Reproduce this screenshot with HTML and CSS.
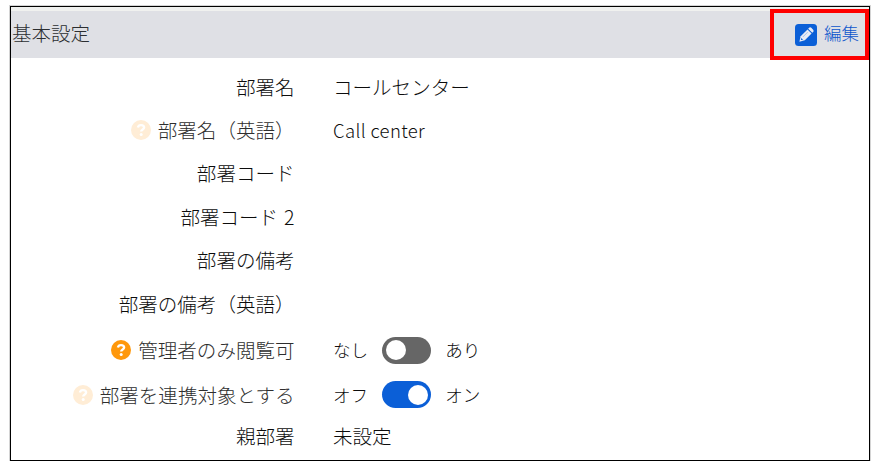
FILE: index.html
```html
<!DOCTYPE html>
<html lang="ja">
<head>
  <meta charset="UTF-8">
  <meta name="viewport" content="width=device-width, initial-scale=1.0">
  <title>基本設定</title>
  <link rel="stylesheet" href="styles.css">
</head>
<body>

  <div class="panel">
    <div class="panel-header">
      <span class="panel-title">基本設定</span>
      <a class="edit-link">
        <svg class="edit-icon" viewBox="0 0 22 22">
          <rect width="22" height="22" rx="3.5" fill="#0b5fd7"/>
          <g transform="translate(11 11) rotate(45)" fill="#e8ebf5">
            <path d="M-2.9 -7.2Q-2.9 -8.8 -1.3 -8.8H1.3Q2.9 -8.8 2.9 -7.2V-6H-2.9Z"/>
            <path d="M-2.9 -5H2.9V4.6L0 9.4L-2.9 4.6Z"/>
            <path d="M-0.8 -3.2V3.6" stroke="#8fb2ea" stroke-width="0.7"/>
            <path d="M-1.3 5.4H1.3L0 7.2Z" fill="#0b5fd7"/>
          </g>
        </svg>
        <span>編集</span>
      </a>
    </div>

    <div class="rows">
      <div class="row">
        <div class="label">部署名</div>
        <div class="value">コールセンター</div>
      </div>
      <div class="row">
        <div class="label muted"><span class="help faded"><svg viewBox="0 0 20 20"><circle cx="10" cy="10" r="10"/><path d="M6.9 7.5C7.3 5.7 8.4 5.1 10 5.1C11.9 5.1 13.1 6.1 13.1 7.6C13.1 9.6 10.2 9.5 10.2 11.6"/><circle class="dot" cx="10.2" cy="14.6" r="1.5"/></svg></span>部署名（英語）</div>
        <div class="value latin">Call center</div>
      </div>
      <div class="row">
        <div class="label">部署コード</div>
        <div class="value"></div>
      </div>
      <div class="row">
        <div class="label">部署コード<span class="num">2</span></div>
        <div class="value"></div>
      </div>
      <div class="row">
        <div class="label">部署の備考</div>
        <div class="value"></div>
      </div>
      <div class="row">
        <div class="label">部署の備考（英語）</div>
        <div class="value"></div>
      </div>
      <div class="row">
        <div class="label muted"><span class="help"><svg viewBox="0 0 20 20"><circle cx="10" cy="10" r="10"/><path d="M6.9 7.5C7.3 5.7 8.4 5.1 10 5.1C11.9 5.1 13.1 6.1 13.1 7.6C13.1 9.6 10.2 9.5 10.2 11.6"/><circle class="dot" cx="10.2" cy="14.6" r="1.5"/></svg></span>管理者のみ閲覧可</div>
        <div class="value switch-row">
          <span>なし</span>
          <span class="switch"><span class="knob"></span></span>
          <span>あり</span>
        </div>
      </div>
      <div class="row">
        <div class="label muted"><span class="help faded"><svg viewBox="0 0 20 20"><circle cx="10" cy="10" r="10"/><path d="M6.9 7.5C7.3 5.7 8.4 5.1 10 5.1C11.9 5.1 13.1 6.1 13.1 7.6C13.1 9.6 10.2 9.5 10.2 11.6"/><circle class="dot" cx="10.2" cy="14.6" r="1.5"/></svg></span>部署を連携対象とする</div>
        <div class="value switch-row">
          <span>オフ</span>
          <span class="switch on"><span class="knob"></span></span>
          <span>オン</span>
        </div>
      </div>
      <div class="row">
        <div class="label">親部署</div>
        <div class="value">未設定</div>
      </div>
    </div>

    <div class="highlight"></div>
  </div>

</body>
</html>
```

FILE: styles.css
```css
* {
  box-sizing: border-box;
}

body {
  margin: 0;
  padding: 6px 5px 0 10px;
  background: #fff;
  color: #0c0c0c;
  font-family: "Noto Sans CJK JP", sans-serif;
  font-weight: 300;
  font-size: 19.55px;
  line-height: 28px;
}

.panel {
  position: relative;
  height: 455px;
  border: 1px solid #000;
  box-shadow: 0 0 0 1px #d4d4d4;
}

.panel-header {
  display: flex;
  align-items: center;
  justify-content: space-between;
  height: 51px;
  padding: 0 10px 0 1px;
  border-top: 4px solid #f0f1ef;
  background: #dfe0e5;
}

.panel-title {
  color: #2b2e31;
  padding-bottom: 4px;
}

.edit-link {
  display: flex;
  align-items: center;
  gap: 7px;
  color: #0d55cc;
  font-size: 17.5px;
}

.edit-link span {
  padding-bottom: 4px;
}

.edit-icon {
  display: block;
  width: 22px;
  height: 22px;
}

.rows {
  display: grid;
  grid-template-rows: repeat(6, 43.4px) 50px 39px 44px;
  padding-top: 7px;
}

.row {
  display: grid;
  grid-template-columns: 283.5px 1fr;
  column-gap: 38.5px;
  align-items: center;
}

.label {
  display: flex;
  align-items: center;
  justify-content: flex-end;
  white-space: nowrap;
}

.muted {
  color: #2e2e2e;
}

.num {
  margin-left: 6px;
}

.latin {
  font-size: 18.5px;
  letter-spacing: 0.35px;
}

.help {
  margin-right: 7px;
}

.help svg {
  display: block;
  width: 20px;
  height: 20px;
  fill: #ff980b;
}

.help path {
  fill: none;
  stroke: #fff;
  stroke-width: 2.4;
}

.help .dot {
  fill: #fff;
}

.faded svg {
  fill: #ffedd6;
}

.switch-row {
  display: flex;
  align-items: center;
  gap: 14px;
  font-size: 17.6px;
}

.switch {
  display: flex;
  align-items: center;
  width: 49px;
  height: 27px;
  padding: 0 4px;
  border-radius: 14px;
  background: #666;
}

.knob {
  width: 20px;
  height: 20px;
  border-radius: 50%;
  background: #fff;
}

.on {
  justify-content: flex-end;
  padding-right: 3px;
  background: #0b5fd7;
}

/* red frame drawn over the edit button */
.highlight {
  position: absolute;
  top: 2px;
  right: 0;
  width: 99px;
  height: 51px;
  border: 4px solid #f00;
}
```
